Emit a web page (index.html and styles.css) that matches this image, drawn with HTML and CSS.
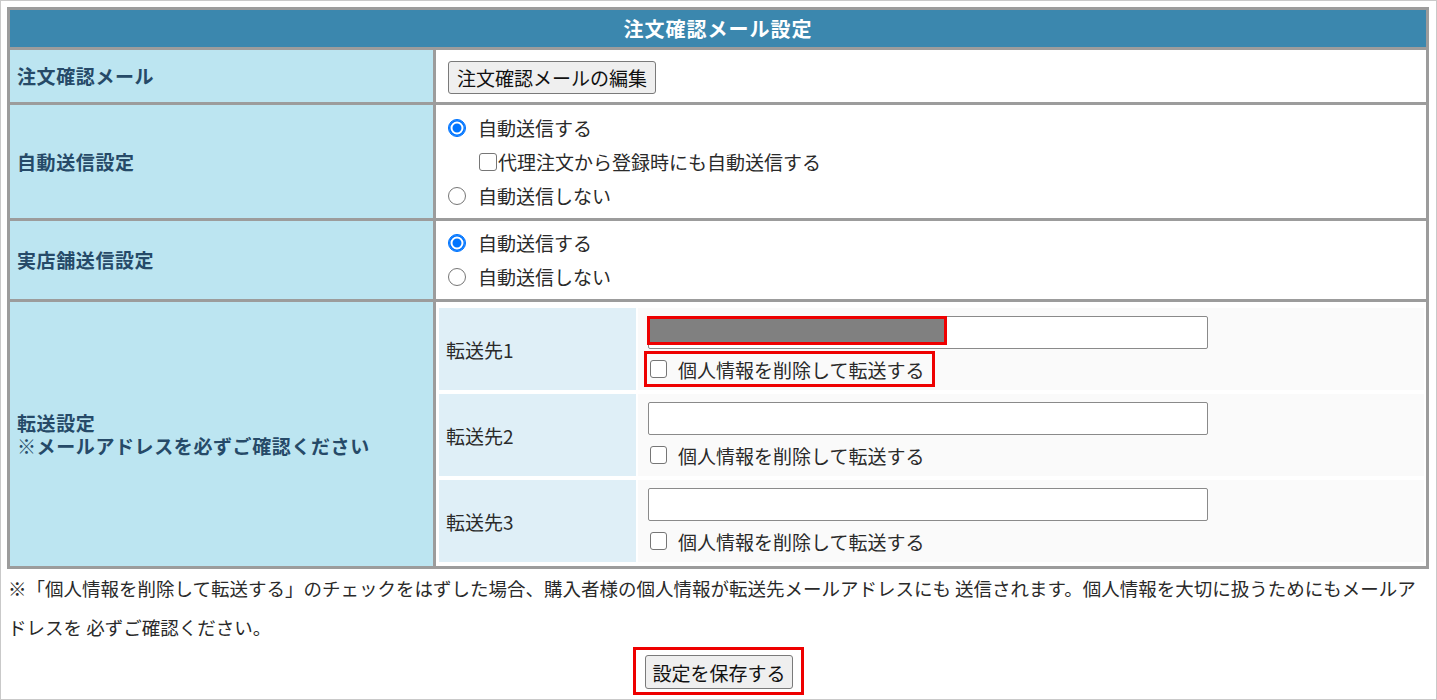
FILE: index.html
```html
<!DOCTYPE html>
<html lang="ja">
<head>
<meta charset="utf-8">
<title>注文確認メール設定</title>
<link rel="stylesheet" href="styles.css">
</head>
<body>
<div class="frame">
  <table class="settings">
    <tr>
      <th class="head" colspan="2">注文確認メール設定</th>
    </tr>
    <tr class="r1">
      <th class="label">注文確認メール</th>
      <td class="value mid"><button type="button" class="btn">注文確認メールの編集</button></td>
    </tr>
    <tr class="r2">
      <th class="label">自動送信設定</th>
      <td class="value opts">
        <label class="opt"><input type="radio" name="auto" checked>自動送信する</label>
        <label class="opt sub"><input type="checkbox">代理注文から登録時にも自動送信する</label>
        <label class="opt"><input type="radio" name="auto">自動送信しない</label>
      </td>
    </tr>
    <tr class="r3">
      <th class="label">実店舗送信設定</th>
      <td class="value opts">
        <label class="opt"><input type="radio" name="store" checked>自動送信する</label>
        <label class="opt"><input type="radio" name="store">自動送信しない</label>
      </td>
    </tr>
    <tr class="r4">
      <th class="label last multi"><span class="ml">転送設定</span><span class="ml">※メールアドレスを必ずご確認ください</span></th>
      <td class="value last nest-cell">
        <table class="nested">
          <tr>
            <th class="nlabel">転送先1</th>
            <td class="nvalue">
              <div class="field">
                <input type="text" class="addr">
                <span class="mask"></span>
              </div>
              <label class="strip hl"><input type="checkbox">個人情報を削除して転送する</label>
            </td>
          </tr>
          <tr>
            <th class="nlabel">転送先2</th>
            <td class="nvalue">
              <div class="field"><input type="text" class="addr"></div>
              <label class="strip"><input type="checkbox">個人情報を削除して転送する</label>
            </td>
          </tr>
          <tr>
            <th class="nlabel">転送先3</th>
            <td class="nvalue">
              <div class="field"><input type="text" class="addr"></div>
              <label class="strip"><input type="checkbox">個人情報を削除して転送する</label>
            </td>
          </tr>
        </table>
      </td>
    </tr>
  </table>
  <p class="note">※「個人情報を削除して転送する」のチェックをはずした場合、購入者様の個人情報が転送先メールアドレスにも 送信されます。個人情報を大切に扱うためにもメールアドレスを 必ずご確認ください。</p>
  <div class="save-row">
    <div class="save-box"><button type="button" class="btn save">設定を保存する</button></div>
  </div>
</div>
</body>
</html>
```

FILE: styles.css
```css
html, body {
  margin: 0;
  padding: 0;
  background: #ffffff;
}

body {
  font-family: "Noto Sans CJK JP", "Noto Sans", sans-serif;
  font-size: 19px;
  color: #2a2a2a;
}

.frame {
  width: 1437px;
  height: 700px;
  box-sizing: border-box;
  border: 1px solid #c9c9c9;
  padding: 6px 7px 0 6px;
  overflow: hidden;
}

.settings {
  width: 1422px;
  border-collapse: separate;
  border-spacing: 0;
  border: 3px solid #9c9c9c;
}

.settings > tbody > tr > th,
.settings > tbody > tr > td {
  box-sizing: border-box;
  padding: 0;
  border-bottom: 3px solid #9c9c9c;
}

.settings > tbody > tr > .last {
  border-bottom: 0;
}

.head {
  height: 40px;
  background: #3b87ae;
  color: #ffffff;
  font-size: 20px;
  font-weight: bold;
  letter-spacing: 1px;
  line-height: 37px;
  text-align: center;
}

.label {
  width: 426px;
  border-right: 3px solid #9c9c9c;
  background: #bce5f1;
  color: #264a68;
  font-weight: bold;
  letter-spacing: 0.6px;
  text-align: left;
  vertical-align: middle;
  padding-left: 7px !important;
  line-height: 22px;
}

.ml {
  display: block;
  height: 23px;
  line-height: 23px;
}

.value {
  background: #ffffff;
  vertical-align: middle;
}

.r1 > th, .r1 > td { height: 55px; }
.r2 > th, .r2 > td { height: 116px; }
.r3 > th, .r3 > td { height: 80px; }
.r4 > th, .r4 > td { height: 264px; }

.mid {
  padding: 2px 0 0 12px !important;
}

.btn {
  font-family: "Noto Sans CJK JP", "Noto Sans", sans-serif;
  font-size: 19px;
  color: #111111;
  background: #efefef;
  border: 1px solid #7a7a7a;
  border-radius: 3px;
  height: 33px;
  padding: 0 8px;
  line-height: 31px;
  margin: 0;
}

.opts {
  padding: 5px 0 5px 12px !important;
}

.opt {
  display: flex;
  align-items: center;
  height: 34px;
  line-height: 34px;
}

input[type="radio"],
input[type="checkbox"] {
  -webkit-appearance: none;
  appearance: none;
  box-sizing: border-box;
  flex: none;
  background: #ffffff;
  border: 1px solid #767676;
}

input[type="radio"] {
  width: 18px;
  height: 18px;
  border-radius: 50%;
}

input[type="radio"]:checked {
  border-color: #0075ff;
  background: #0075ff;
  box-shadow: inset 0 0 0 1.5px #0075ff, inset 0 0 0 3.5px #ffffff;
}

input[type="checkbox"] {
  width: 17px;
  height: 18px;
  border-radius: 3px;
}

.opt input[type="radio"] {
  margin: 0 12px 0 0;
}

.opt.sub {
  padding-left: 30px;
}

.opt input[type="checkbox"] {
  width: 18px;
  height: 18px;
  margin: 0 1px 0 1px;
}

.nest-cell {
  vertical-align: top !important;
  padding: 2px 0 0 1px !important;
  background: #ffffff;
}

.nested {
  width: 100%;
  border-collapse: separate;
  border-spacing: 2px 4px;
}

.nested td, .nested th {
  height: 82px;
  box-sizing: border-box;
  padding: 0;
}

.nlabel {
  width: 197px;
  background: #dfeff7;
  font-weight: normal;
  text-align: left;
  vertical-align: middle;
  padding-left: 7px !important;
  color: #2a2a2a;
}

.nvalue {
  background: #fafafa;
  vertical-align: top;
  padding: 8px 0 0 10px !important;
}

.field {
  position: relative;
  width: 560px;
  height: 33px;
}

.addr {
  display: block;
  width: 560px;
  height: 33px;
  box-sizing: border-box;
  margin: 0;
  border: 1px solid #8a8a8a;
  border-radius: 2px;
  background: #ffffff;
}

.mask {
  position: absolute;
  left: -1px;
  top: 0;
  width: 294px;
  height: 23px;
  border: 3px solid #ee0000;
  background: #808080;
}

.strip {
  display: inline-flex;
  align-items: center;
  box-sizing: border-box;
  height: 36px;
  margin: 2px 0 0 -4px;
  padding: 0 8px 0 3px;
  border: 3px solid transparent;
}

.strip.hl {
  border-color: #ee0000;
}

.strip input {
  margin: 0 11px 0 0;
}

.note {
  margin: 0 0 0 1px;
  width: 1416px;
  font-size: 18.5px;
  line-height: 39px;
  color: #2a2a2a;
}

.save-row {
  display: flex;
  justify-content: center;
  padding-left: 1px;
}

.save-box {
  border: 3px solid #ee0000;
  padding: 5px 8px 3px 9px;
}

.save {
  height: 34px;
  padding: 0 6px;
}
```
